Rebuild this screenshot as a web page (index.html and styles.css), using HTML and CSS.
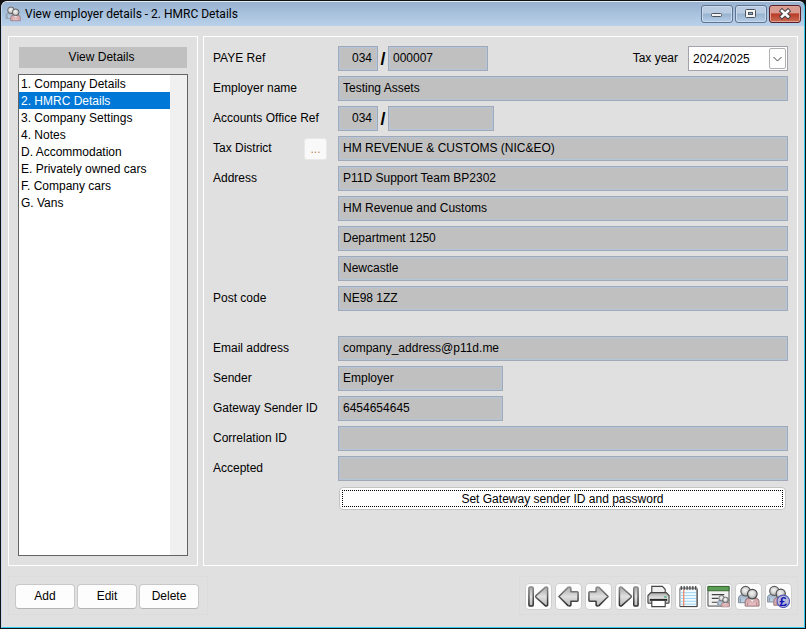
FILE: index.html
```html
<!DOCTYPE html>
<html lang="en">
<head>
<meta charset="utf-8">
<title>View employer details - 2. HMRC Details</title>
<link rel="stylesheet" href="styles.css">
</head>
<body>
<svg class="defs" aria-hidden="true">
  <defs>
    <linearGradient id="steel" x1="0" y1="0" x2="0" y2="1"><stop offset="0" stop-color="#a8a8a8"/><stop offset=".5" stop-color="#e0e0e0"/><stop offset="1" stop-color="#b8b8b8"/></linearGradient>
    <linearGradient id="edge" gradientUnits="userSpaceOnUse" x1="0" y1="2" x2="0" y2="22"><stop offset="0" stop-color="#8c8c8c"/><stop offset="1" stop-color="#2c2c2c"/></linearGradient>
    <radialGradient id="head" cx=".45" cy=".4" r=".65"><stop offset="0" stop-color="#f6f6f6"/><stop offset=".5" stop-color="#d4d4d4"/><stop offset="1" stop-color="#8a8a8a"/></radialGradient>
    <linearGradient id="blue" x1="0" y1="0" x2="0" y2="1"><stop offset="0" stop-color="#9db0c6"/><stop offset="1" stop-color="#c4d8ee"/></linearGradient>
    <linearGradient id="pink" x1="0" y1="0" x2="0" y2="1"><stop offset="0" stop-color="#c99ea2"/><stop offset="1" stop-color="#f0c6c9"/></linearGradient>
    <symbol id="people" viewBox="0 0 24 24">
      <path d="M1.500 18.500v-4q0-4 4.500-4.500h6v8.500z" fill="url(#blue)" stroke="#7b8693"/>
      <path d="M3.500 18v-4" stroke="#7b8693"/>
      <circle cx="9" cy="6.500" r="5" fill="url(#head)" stroke="#5a5a5a" stroke-width="1.200"/>
      <path d="M8.500 22v-4q0-4.500 4.500-4.500h5.500q4.500 0 4.500 4.500v4z" fill="url(#pink)" stroke="#8d6c6f"/>
      <path d="M11 21.500v-3M20.500 21.500v-3" stroke="#a98185"/>
      <path d="M12.500 14l3.500 3.500 3-3.500z" fill="#f2f2f2"/>
      <circle cx="16" cy="9.500" r="5" fill="url(#head)" stroke="#4a4a4a" stroke-width="1.200"/>
    </symbol>
  </defs>
</svg>
<div class="window">
  <header class="titlebar">
    <svg class="app-icon"><use href="#people"/></svg>
    <h1>View employer details - 2. HMRC Details</h1>
    <div class="caption-buttons">
      <button type="button" aria-label="Minimize"><svg viewBox="0 0 30 16"><rect x="9.500" y="7.500" width="10" height="3" rx="1" fill="#f4f4f4" stroke="#4d535c"/></svg></button>
      <button type="button" aria-label="Maximize"><svg viewBox="0 0 30 16"><rect x="9.500" y="3.500" width="10" height="8" rx="1" fill="#f4f4f4" stroke="#4d535c"/><rect x="12.500" y="6.500" width="4" height="2" fill="#91aecb" stroke="#4d535c"/></svg></button>
      <button type="button" class="close" aria-label="Close"><svg viewBox="0 0 30 16"><path d="M12 5l6 5.500M18 5l-6 5.500" stroke="#4d434a" stroke-width="4.500" stroke-linecap="square"/><path d="M12 5l6 5.500M18 5l-6 5.500" stroke="#fff" stroke-width="2.500" stroke-linecap="square"/></svg></button>
    </div>
  </header>

  <main class="content">
    <aside class="panel side">
      <h2>View Details</h2>
      <nav class="list">
        <a href="#company">1. Company Details</a>
        <a href="#hmrc" class="selected" aria-current="page">2. HMRC Details</a>
        <a href="#settings">3. Company Settings</a>
        <a href="#notes">4. Notes</a>
        <a href="#accommodation">D. Accommodation</a>
        <a href="#private">E. Privately owned cars</a>
        <a href="#cars">F. Company cars</a>
        <a href="#vans">G. Vans</a>
      </nav>
    </aside>

    <form class="panel details">
      <div class="row">
        <label for="paye">PAYE Ref</label>
        <div class="fields">
          <input id="paye" class="district" value="034" readonly><span class="slash">/</span><input class="reference" aria-label="PAYE reference number" value="000007" readonly>
          <label class="year-label" for="year">Tax year</label>
          <div class="dropdown">
            <select id="year"><option>2024/2025</option></select>
            <span class="arrow"><svg viewBox="0 0 15 19"><path d="M3.500 8l4 4 4-4" fill="none" stroke="#444"/></svg></span>
          </div>
        </div>
      </div>
      <div class="row"><label for="name">Employer name</label><input id="name" value="Testing Assets" readonly></div>
      <div class="row">
        <label for="accounts">Accounts Office Ref</label>
        <div class="fields"><input id="accounts" class="district" value="034" readonly><span class="slash">/</span><input class="reference office" aria-label="Accounts office number" readonly></div>
      </div>
      <div class="row">
        <div class="lookup"><label for="tax-district">Tax District</label><button type="button" aria-label="Find tax district">...</button></div>
        <input id="tax-district" value="HM REVENUE &amp; CUSTOMS (NIC&amp;EO)" readonly>
      </div>
      <div class="row"><label for="address">Address</label><input id="address" value="P11D Support Team BP2302" readonly></div>
      <div class="row"><input class="continued" aria-label="Address line 2" value="HM Revenue and Customs" readonly></div>
      <div class="row"><input class="continued" aria-label="Address line 3" value="Department 1250" readonly></div>
      <div class="row"><input class="continued" aria-label="Address line 4" value="Newcastle" readonly></div>
      <div class="row"><label for="postcode">Post code</label><input id="postcode" value="NE98 1ZZ" readonly></div>
      <div class="row section"><label for="email">Email address</label><input id="email" value="company_address@p11d.me" readonly></div>
      <div class="row"><label for="sender">Sender</label><input id="sender" class="medium" value="Employer" readonly></div>
      <div class="row"><label for="gateway">Gateway Sender ID</label><input id="gateway" class="medium" value="6454654645" readonly></div>
      <div class="row"><label for="correlation">Correlation ID</label><input id="correlation" readonly></div>
      <div class="row"><label for="accepted">Accepted</label><input id="accepted" readonly></div>
      <div class="row"><button type="button" class="gateway"><span>Set Gateway sender ID and password</span></button></div>
    </form>
  </main>

  <footer class="actions">
    <div class="group">
      <button type="button">Add</button>
      <button type="button">Edit</button>
      <button type="button">Delete</button>
    </div>
    <div class="group tools">
      <button type="button" aria-label="First"><svg viewBox="0 0 24 24" fill="url(#steel)" stroke="url(#edge)" stroke-width="1.600"><rect x="2" y="2" width="4.500" height="20" rx="1.500"/><path d="M21.500 3v18q-1 1.500-2.500.5L9.500 13q-1-1 0-2L19 2.500q1.500-1 2.500.5z"/></svg></button>
      <button type="button" aria-label="Previous"><svg viewBox="0 0 24 24" fill="url(#steel)" stroke="url(#edge)" stroke-width="1.600"><path d="M2 12l9.500-9.500q3-1 3 1V7H21q1 0 1 1v8q0 1-1 1h-6.500v3.500q0 2-3 1z" stroke-linejoin="round"/></svg></button>
      <button type="button" aria-label="Next"><svg viewBox="0 0 24 24" fill="url(#steel)" stroke="url(#edge)" stroke-width="1.600"><path d="M22 12l-9.500-9.500q-3-1-3 1V7H3Q2 7 2 8v8q0 1 1 1h6.500v3.500q0 2 3 1z" stroke-linejoin="round"/></svg></button>
      <button type="button" aria-label="Last"><svg viewBox="0 0 24 24" fill="url(#steel)" stroke="url(#edge)" stroke-width="1.600"><rect x="17.500" y="2" width="4.500" height="20" rx="1.500"/><path d="M2.500 3v18q1 1.500 2.500.5l9.500-8.500q1-1 0-2L5 2.500Q3.500 1.500 2.500 3z"/></svg></button>
      <button type="button" aria-label="Print"><svg viewBox="0 0 24 24" stroke="#444" stroke-width="1.200"><path d="M5 10V1.500h11l3 3V10" fill="#efefef"/><path d="M1 18v-7l3-3h16l3 3v7q0 1-1 1H2q-1 0-1-1z" fill="url(#steel)"/><path d="M18 12.500h2.500" stroke="#3fae76" stroke-width="1.500"/><path d="M3 15.500h18" stroke="#222" stroke-width="2"/><path d="M5 16h14v6.500H5z" fill="#fff"/></svg></button>
      <button type="button" aria-label="Notes"><svg viewBox="0 0 24 24"><path d="M3 3.500h18v19H3z" fill="#f1faff" stroke="#666"/><path d="M4 8h16M4 11h16M4 14h16M4 17h16M4 20h16" stroke="#9bd2ee"/><path d="M7 5v17" stroke="#f08b6d" stroke-width="1.400"/><path d="M3 22.500h18v-18" fill="none" stroke="#444"/><path d="M3 3.500h18" stroke="#999" stroke-width="2"/><path d="M4.500 1v4M7.500 1v4M10.500 1v4M13.500 1v4M16.500 1v4M19.500 1v4" stroke="#444" stroke-width="1.300"/></svg></button>
      <button type="button" aria-label="Employee list"><svg viewBox="0 0 24 24"><path d="M1 1.500h22v20.500H1z" fill="#f2f2f2" stroke="#444"/><path d="M1 1.500h22V6H1z" fill="#5d9f57" stroke="#35672f"/><path d="M5 10h13M5 14h7M5 18h6" stroke="#444" stroke-width="1.300"/><use href="#people" x="10" y="10" width="14" height="14"/></svg></button>
      <button type="button" aria-label="Employees"><svg><use href="#people"/></svg></button>
      <button type="button" aria-label="Employee payments"><svg viewBox="0 0 24 24"><use href="#people" x="-1" width="23" height="23"/><circle cx="17" cy="17" r="6.500" fill="#b9bbd8" stroke="#5658b4" stroke-width="1.200"/><text x="17" y="22" class="pound">£</text></svg></button>
    </div>
  </footer>
</div>
</body>
</html>
```
FILE: styles.css
```css
* { box-sizing: border-box; }

body {
  margin: 0;
  background: #111;
  color: #000;
  font: 12px/16px "Liberation Sans", Arial, sans-serif;
}

button, input, select { font: inherit; color: inherit; }
h1, h2 { margin: 0; font-weight: normal; }
svg { display: block; }
.defs { position: absolute; width: 0; height: 0; }

.window {
  display: flex;
  flex-direction: column;
  min-height: calc(100vh - 2px);
  margin: 1px;
  border: 1px solid #35c8ee;
  border-top-color: #e4edf8;
  border-left-color: #c3d7ee;
  border-radius: 6px 6px 0 0;
  background: #e0e0e0;
  overflow: hidden;
}

.titlebar {
  display: flex;
  align-items: center;
  height: 24px;
  padding: 0 3px;
  background: linear-gradient(#98b2d0, #b9d1ea);
}

.app-icon { width: 16px; height: 16px; }

.titlebar h1 {
  flex: 1;
  padding-left: 4px;
  font: 12px/16px Roboto, "Open Sans", sans-serif;
}

.caption-buttons { display: flex; gap: 2px; }

.caption-buttons button {
  width: 32px;
  height: 18px;
  padding: 0;
  border: 1px solid #5f7490;
  border-radius: 3px;
  background: linear-gradient(#b9cce2 0 44%, #98b3d0 50%, #b5cde7);
  box-shadow: inset 0 0 0 1px #c9daec;
}

.caption-buttons .close {
  border-color: #5a2027;
  background: linear-gradient(#d99a8f 0 42%, #b93c28 50%, #cb6c54);
  box-shadow: inset 0 0 0 1px #dfa094;
}

.content {
  display: grid;
  grid-template-columns: 190px 1fr;
  gap: 5px;
  flex: 1;
  padding: 10px 6px 0;
}

.panel { border: 1px solid #fff; }

.side {
  display: flex;
  flex-direction: column;
  gap: 6px;
  padding: 10px 9px 9px;
}

.side h2 {
  margin: 0 1px;
  padding-right: 3px;
  background: #c0c0c0;
  font-size: 12px;
  line-height: 21px;
  text-align: center;
}

.list {
  flex: 1;
  border: 1px solid #646464;
  padding-right: 17px;
  background: linear-gradient(to left, #f0f0f0 17px, #fff 17px);
}

.list a {
  display: block;
  padding: 1px 0 0 2px;
  color: #000;
  line-height: 16px;
  text-decoration: none;
}

.list .selected { background: #0078d7; color: #fff; }

.details {
  display: flex;
  flex-direction: column;
  gap: 5px;
  padding: 9px;
}

.row {
  display: grid;
  grid-template-columns: 125px 1fr;
  align-items: center;
  min-height: 25px;
}

.section { margin-top: 20px; }
.fields { display: flex; align-items: center; }
.continued, .gateway { grid-column: 2; }
.details label { padding-bottom: 2px; }

.details input {
  width: 100%;
  height: 25px;
  border: 1px solid #a2a8b4;
  border-radius: 0;
  padding: 0 4px 1px;
  background: #c0c0c0;
  box-shadow: inset 0 0 0 1px #b4c6dc;
  outline: 0;
}

.details .district { width: 40px; padding-right: 5px; text-align: right; }
.details .reference { width: 100px; }
.details .office { width: 106px; }
.details .medium { width: 165px; }

.slash {
  width: 10px;
  font-size: 18px;
  font-weight: bold;
  text-align: center;
}

.year-label { margin-left: auto; }

.dropdown { position: relative; margin-left: 10px; }

.dropdown select {
  display: block;
  width: 100px;
  height: 25px;
  border: 1px solid #a2a2aa;
  border-radius: 0;
  padding: 0 4px;
  background: #fff;
  appearance: none;
}

.arrow {
  position: absolute;
  top: 2px;
  right: 2px;
  width: 17px;
  height: 21px;
  border: 1px solid #b0b0b0;
  border-radius: 2px;
  background: #fdfdfd;
  pointer-events: none;
}

.lookup {
  display: flex;
  align-items: center;
  justify-content: space-between;
  padding-right: 11px;
}

.lookup button {
  width: 23px;
  height: 22px;
  padding: 0;
  border: 1px solid #e9e9e9;
  border-radius: 3px;
  background: #f9f9f9;
  color: #b98a58;
}

.gateway {
  height: 23px;
  margin: 0 2px 0 1px;
  border: 1px solid #c4c4c4;
  border-radius: 4px;
  padding: 2px;
  background: #fdfdfd;
}

.gateway span {
  display: block;
  border: 1px dotted #000;
  padding-top: 1px;
  line-height: 14px;
}

.actions {
  display: flex;
  justify-content: space-between;
  padding: 10px 6px 12px;
}

.group {
  display: flex;
  align-items: center;
  gap: 2px;
  height: 39px;
  border: 1px solid #dcdcdc;
  padding: 1px 8px 0 6px;
}

.group button {
  width: 60px;
  height: 25px;
  border: 1px solid #c8c8c8;
  border-bottom-color: #b4b4b4;
  border-radius: 4px;
  padding: 0;
  background: #fdfdfd;
}

.tools { gap: 3px; padding: 1px 5px 0; }

.tools button {
  display: grid;
  place-items: center;
  width: 27px;
  height: 27px;
  border-color: #d0d0d0;
}

.tools svg { width: 23px; height: 23px; }

.pound {
  fill: #1414b4;
  font: bold 14px "Liberation Sans", sans-serif;
  text-anchor: middle;
}
```
